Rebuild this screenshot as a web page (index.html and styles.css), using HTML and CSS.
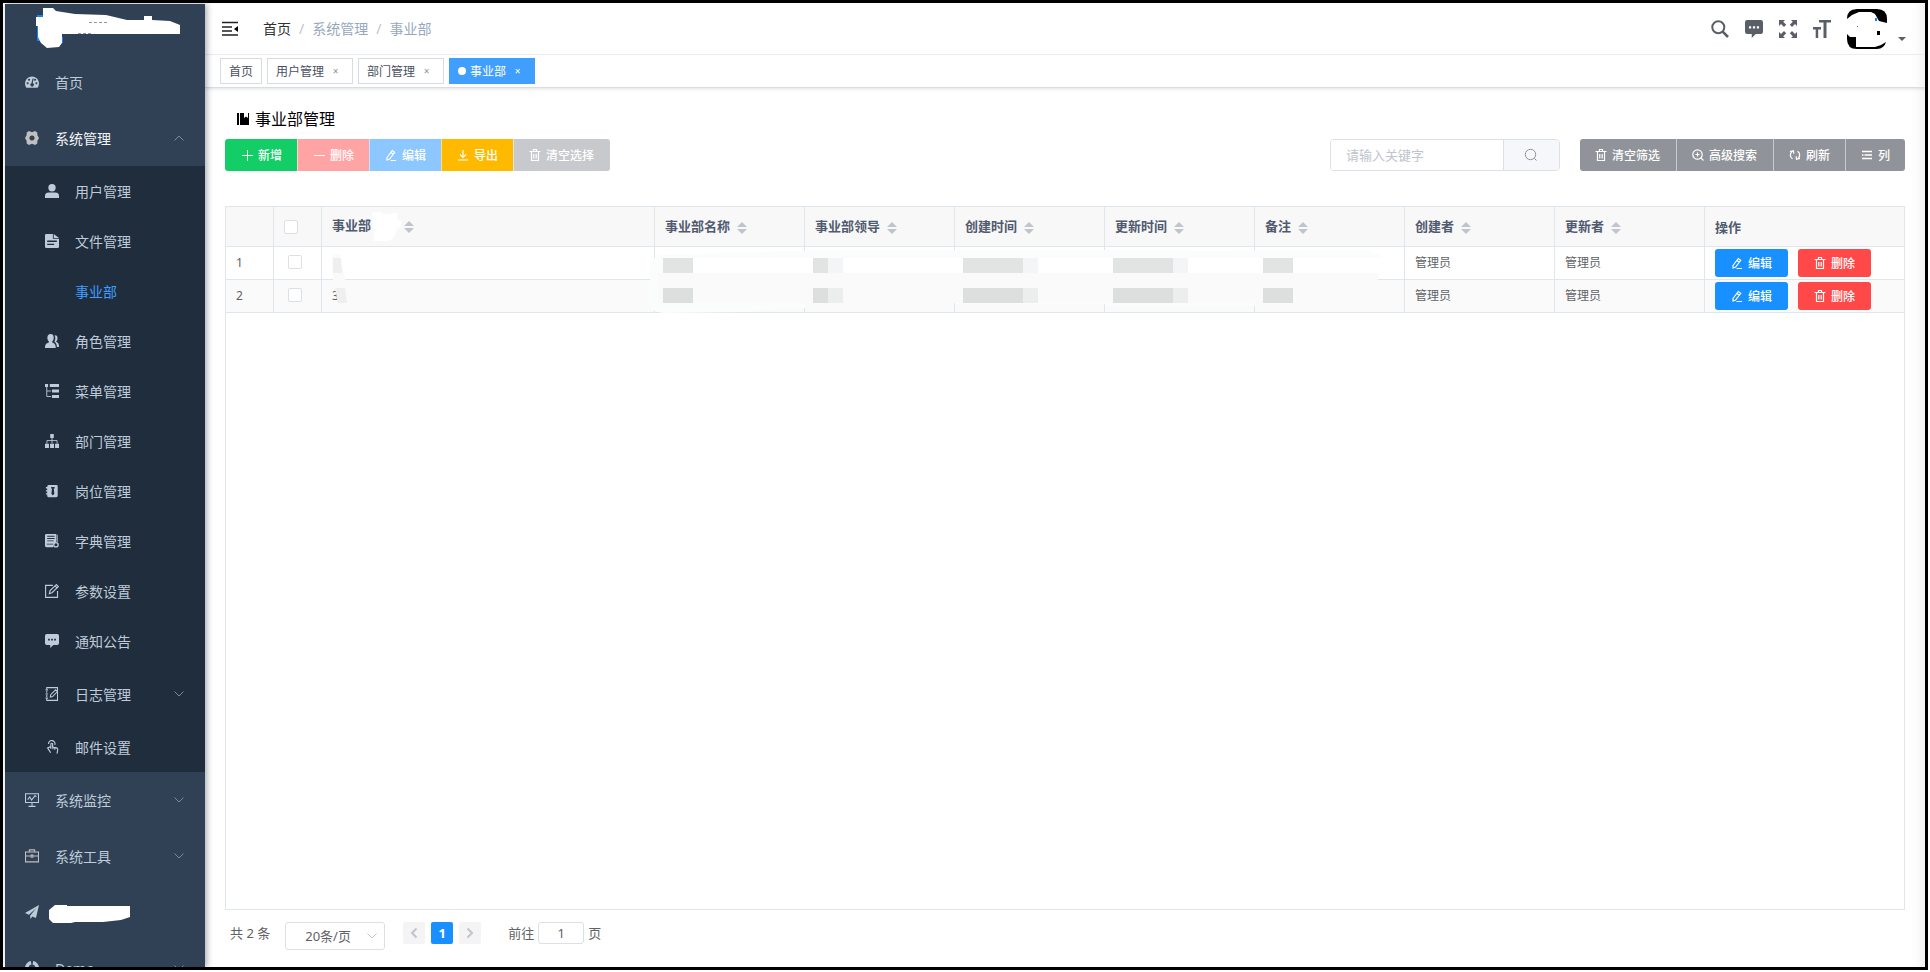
FILE: index.html
```html
<!DOCTYPE html>
<html lang="zh-CN">
<head>
<meta charset="utf-8">
<title>事业部管理</title>
<link rel="stylesheet" href="styles.css">
</head>
<body>
<svg class="defs" aria-hidden="true">
  <symbol id="dash" viewBox="0 0 16 16"><path fill="currentColor" fill-rule="evenodd" d="M1.6 14.5A8 8 0 1 1 14.400 14.500zM3 8.300a1.100 1.100 0 1 0 .01 0zM4.600 4.400a1.100 1.100 0 1 0 .01 0zM11.400 4.400a1.100 1.100 0 1 0 .01 0zM13 8.300a1.100 1.100 0 1 0 .01 0zM8.600 4 7.400 9.300a2 2 0 1 0 1.500 0L9.800 4z"/></symbol>
  <symbol id="gear" viewBox="0 0 16 16"><path fill="currentColor" fill-rule="evenodd" d="M4.500 0 8 1.300 11.500 0l2.500 1.800.2 3L16 8l-1.800 3.200-.2 3-2.500 1.800L8 14.700 4.500 16 2 14.200l-.2-3L0 8l1.800-3.200.2-3zM8 5a3 3 0 1 0 .01 0z"/></symbol>
  <symbol id="user" viewBox="0 0 16 16"><circle cx="8" cy="4.300" r="4.200" fill="currentColor"/><path fill="currentColor" d="M0 16v-2.500Q0 9.600 4.500 9.600h7Q16 9.600 16 13.500V16z"/></symbol>
  <symbol id="doc" viewBox="0 0 16 16"><path fill="currentColor" fill-rule="evenodd" d="M1.500 0H9v5.500h7v9q0 1.500-1.500 1.500h-13Q0 16 0 14.500v-13Q0 0 1.500 0zM10 0l6 4.600h-6zM2.500 7.500V9h11V7.500zM2.500 11v1.500h8V11z"/></symbol>
  <symbol id="peoples" viewBox="0 0 16 16"><path fill="currentColor" d="M6.500 0C9 0 10 1.900 10 4.200 10 6.400 9.200 7.500 8.300 8.400v1.200c2.500.9 4 2 4 6.400H0c0-4.400 1.500-5.500 4.400-6.400V8.400C3.400 7.500 2.700 6.400 2.700 4.200 2.700 1.900 4 0 6.500 0zM11 1.500c2.500-.2 3.300 1.300 3.300 3.400 0 2-.7 3-1.700 4 2.700 1 3.400 2.600 3.400 6h-2.400c-.2-3.300-1-4.900-2.900-6C12 7 12.200 4 11 1.500z"/></symbol>
  <symbol id="tree" viewBox="0 0 16 16"><path fill="currentColor" d="M0 0h3.500v3.500H0zM5.500 0H16v3.500H5.500zM8 6.300h8v3.500H8zM8 12.500h8V16H8z"/><path fill="none" stroke="currentColor" d="M2 3v11.300h5M2 8h5"/></symbol>
  <symbol id="org" viewBox="0 0 16 16"><path fill="currentColor" d="M6 0h4v4.500H6zM0 11h4.500v5H0zM5.800 11h4.500v5H5.800zM11.500 11H16v5h-4.500z"/><path fill="none" stroke="currentColor" d="M8 4v7M2.200 11V7.500h11.600V11"/></symbol>
  <symbol id="post" viewBox="0 0 16 16"><path fill="currentColor" fill-rule="evenodd" d="M4 1h9q1.500 0 1.500 1.500v11Q14.500 15 13 15H4q-1.500 0-1.500-1.500V12H1v-1.500h1.500v-2H1V7h1.500V5H1V3.500h1.500Q2.500 1 4 1zM7 3.500V5h1l-.7 6L9 13l1.700-2L10 5h1V3.500z"/></symbol>
  <symbol id="dict" viewBox="0 0 16 16"><path fill="currentColor" fill-rule="evenodd" d="M1.500 0H13v8.500l-3 2.500H2v1h7.500v3h-8Q0 15 0 13.500v-12Q0 0 1.500 0zM2.500 2v1H11V2zm0 2.700v1H11v-1zm0 2.700v1H10v-1z"/><circle cx="12.500" cy="12.300" r="2.500" fill="none" stroke="currentColor" stroke-width="1.500"/><path stroke="currentColor" d="M14 1v8"/></symbol>
  <symbol id="edit" viewBox="0 0 16 16"><path fill="none" stroke="currentColor" stroke-width="1.300" d="M9 1.600H.7v13.700h13.600V8M5 11l.8-3.500L13 .7l2.200 2.200L8 10zM11.500 2.200l2.200 2.200"/></symbol>
  <symbol id="msg" viewBox="0 0 16 16"><path fill="currentColor" fill-rule="evenodd" d="M2 0h12q2 0 2 2v8.500q0 2-2 2H9.500L6 16v-3.500H2q-2 0-2-2V2q0-2 2-2zM3.500 5.500v2h2v-2zm3.500 0v2h2v-2zm3.500 0v2h2v-2z"/></symbol>
  <symbol id="log" viewBox="0 0 16 16"><path fill="none" stroke="currentColor" stroke-width="1.200" d="M2 3V.7h12.300v14.600H2V13M2 4.500v2M2 9v2.500M.5 3.500h3M.5 8h3M.5 12.500h3M6 11.500 6.700 8.500l5.500-5.300 2 2L8.700 11z"/></symbol>
  <symbol id="touch" viewBox="0 0 16 16"><path fill="none" stroke="currentColor" stroke-width="1.300" d="M4 4.500a3.700 3.700 0 1 1 7.200 1M6.700 10V4.500q1-1.500 2 0V8l4.500 1q1.600.6 1.300 2.500l-.8 4M6.700 9 5.200 8 3 9l3.500 5.500M9 8.500v2M11.200 9v2"/></symbol>
  <symbol id="monitor" viewBox="0 0 16 16"><path fill="none" stroke="currentColor" stroke-width="1.200" d="M.6.8h14.800v10H.6zM8 11v4.200M4 15.300h8M3 7.500l2.500-3L7.500 8l4-5 1.500 1.500"/></symbol>
  <symbol id="tool" viewBox="0 0 16 16"><path fill="none" stroke="currentColor" stroke-width="1.200" d="M.6 3.500h14.800v11.200H.6zM5 3.500V1h6v2.500M.6 8H7m2 0h6.400M7 7h2v2.500H7z"/></symbol>
  <symbol id="plane" viewBox="0 0 16 16"><path fill="currentColor" d="M16 0 0 9l4.500 2L13 3.500 6 12v4l2.500-3 4 1.800z"/></symbol>
  <symbol id="ring" viewBox="0 0 16 16"><path fill="none" stroke="currentColor" stroke-width="4" d="M7 2.100A6 6 0 0 0 2 8a6 6 0 0 0 12 0 6 6 0 0 0-5-5.900"/></symbol>
  <symbol id="down" viewBox="0 0 12 12"><path fill="none" stroke="currentColor" d="M1.500 3.500 6 8l4.500-4.500"/></symbol>
  <symbol id="search" viewBox="0 0 18 18"><circle cx="7.300" cy="7.300" r="6" fill="none" stroke="currentColor" stroke-width="2"/><path stroke="currentColor" stroke-width="2.600" d="m11.700 11.700 5.300 5.300"/></symbol>
  <symbol id="full" viewBox="0 0 18 18"><path fill="currentColor" d="M0 0h6L4.200 1.800l3 3L5 7 2 4 0 6zM18 0v6l-2-2-3 3-2.200-2.200 3-3L12 0zM0 18v-6l2 2 3-3 2.200 2.200-3 3L6 18zM18 18h-6l1.800-1.800-3-3L13 11l3 3 2-2z"/></symbol>
  <symbol id="size" viewBox="0 0 18 18"><path fill="currentColor" d="M6 0h12v2.500h-4.500V18h-3V2.500H6zM0 7h8v2.500H5.200V18H2.700V9.500H0z"/></symbol>
  <symbol id="plus" viewBox="0 0 12 12"><path stroke="currentColor" d="M1 6.500h11M6.500 1v11"/></symbol>
  <symbol id="minus" viewBox="0 0 12 12"><path stroke="currentColor" d="M1 6.500h11"/></symbol>
  <symbol id="pen" viewBox="0 0 12 12"><path fill="none" stroke="currentColor" stroke-width="1.200" d="m2 8.500 5.300-7 2.400 1.800-5.300 7L2 11zM6 3.500l2.300 1.700M5.500 11.500H11"/></symbol>
  <symbol id="export" viewBox="0 0 12 12"><path fill="none" stroke="currentColor" stroke-width="1.200" d="M6 1v7.500M3 5.500l3 3 3-3M1 11h10"/></symbol>
  <symbol id="trash" viewBox="0 0 12 12"><path fill="none" stroke="currentColor" stroke-width="1.200" d="M.5 2.500h11M2.500 2.500v9h7v-9M4.500 2V.5h3V2M4.800 5v4.500M7.200 5v4.500"/></symbol>
  <symbol id="zoomin" viewBox="0 0 12 12"><circle cx="5.500" cy="5.500" r="4.700" fill="none" stroke="currentColor" stroke-width="1.200"/><path stroke="currentColor" stroke-width="1.200" d="M3.500 5.500h4M5.500 3.500v4M9 9l2.500 2.500"/></symbol>
  <symbol id="refresh" viewBox="0 0 12 12"><path fill="none" stroke="currentColor" stroke-width="1.200" d="M3.500 9.800A4.500 4.500 0 0 1 4.500 1.700M8.500 2.200A4.500 4.500 0 0 1 7.500 10.300M1 2.500l3.500-.8.300 3M11 9.500l-3.500.8-.3-3"/></symbol>
  <symbol id="cols" viewBox="0 0 12 12"><path stroke="currentColor" stroke-width="1.300" d="M1 2.500h10M1 6h1.500M3.500 6H11M1 9.500h10"/></symbol>
  <symbol id="find" viewBox="0 0 14 14"><circle cx="6.500" cy="6.500" r="5.200" fill="none" stroke="currentColor"/><path stroke="currentColor" d="m10.300 10.300 2.200 2.200"/></symbol>
  <symbol id="sort" viewBox="0 0 10 14"><path fill="#c0c4cc" d="M0 6l5-5 5 5zM0 8l5 5 5-5z"/></symbol>
</svg>

<div class="frame">
  <aside class="sidebar">
    <div class="logo">
      <svg width="146" height="42" viewBox="0 0 146 42"><path fill="#1283ff" d="M1 8h8v26H1zM20 30h7v6h-7z"/><path fill="#fff" d="M7 1h10l3 3 19 3 31 1 21 5h17V9h8v4l18 1 10 4v9H26v9l-3 4-12 1-6-5-3-6V19H0v-9h7z"/><path stroke="#8d99a8" fill="none" stroke-dasharray="3 2" d="M53 15.500h18M42 26.500h14"/></svg>
    </div>
    <nav>
      <a class="item" href="#"><svg class="ico"><use href="#dash"/></svg>首页</a>
      <button class="item open" type="button"><svg class="ico gray"><use href="#gear"/></svg>系统管理<svg class="chev up"><use href="#down"/></svg></button>
      <div class="sub">
        <a class="item" href="#"><svg class="ico"><use href="#user"/></svg>用户管理</a>
        <a class="item" href="#"><svg class="ico"><use href="#doc"/></svg>文件管理</a>
        <a class="item active" href="#"><svg class="ico"></svg>事业部</a>
        <a class="item" href="#"><svg class="ico"><use href="#peoples"/></svg>角色管理</a>
        <a class="item" href="#"><svg class="ico"><use href="#tree"/></svg>菜单管理</a>
        <a class="item" href="#"><svg class="ico"><use href="#org"/></svg>部门管理</a>
        <a class="item" href="#"><svg class="ico"><use href="#post"/></svg>岗位管理</a>
        <a class="item" href="#"><svg class="ico"><use href="#dict"/></svg>字典管理</a>
        <a class="item" href="#"><svg class="ico"><use href="#edit"/></svg>参数设置</a>
        <a class="item" href="#"><svg class="ico"><use href="#msg"/></svg>通知公告</a>
        <button class="item tall" type="button"><svg class="ico"><use href="#log"/></svg>日志管理<svg class="chev"><use href="#down"/></svg></button>
        <a class="item" href="#"><svg class="ico"><use href="#touch"/></svg>邮件设置</a>
      </div>
      <button class="item" type="button"><svg class="ico"><use href="#monitor"/></svg>系统监控<svg class="chev"><use href="#down"/></svg></button>
      <button class="item" type="button"><svg class="ico gray"><use href="#tool"/></svg>系统工具<svg class="chev"><use href="#down"/></svg></button>
      <a class="item masked" href="#" aria-label="外部链接"><svg class="ico"><use href="#plane"/></svg><svg width="82" height="24" viewBox="0 -4 82 24"><path fill="#fff" d="M6 1h12v1h63v11l-9 3-18 2H26l-4 1H4l-4-4V6z"/></svg></a>
      <button class="item" type="button"><svg class="ico"><use href="#ring"/></svg>Demo<svg class="chev"><use href="#down"/></svg></button>
    </nav>
  </aside>

  <div class="page">
    <header class="navbar">
      <button class="fold" type="button" aria-label="收起菜单"><svg width="17" height="16" viewBox="0 0 17 16"><path stroke="#222" stroke-width="1.600" d="M0 1.500h16M0 6h10M0 10h10M0 14h16"/><path d="M16 5v6l-4-3z"/></svg></button>
      <div class="crumbs"><a href="#">首页</a><i>/</i><span>系统管理</span><i>/</i><span>事业部</span></div>
      <div class="tools">
        <button type="button" aria-label="搜索"><svg><use href="#search"/></svg></button>
        <button type="button" aria-label="消息"><svg><use href="#msg"/></svg></button>
        <button type="button" aria-label="全屏"><svg><use href="#full"/></svg></button>
        <button type="button" aria-label="字号"><svg><use href="#size"/></svg></button>
        <button class="avatar" type="button" aria-label="用户"><svg class="face" viewBox="0 0 40 40"><path d="M10 0h20q10 0 10 10v4l-8-2-4-7-4-2H12L5 6 0 10Q0 0 10 0zM0 25l3 3h6v10h19l6-2 5-3q-2 7-9 7H10Q0 40 0 30zM30 22h3v4h-3z"/><path fill="#1283ff" d="M28 9h2v3h-2zM10 17h1v1h-1z"/></svg><svg class="caret" viewBox="0 0 8 4"><path fill="#5a5e66" d="M0 0h8L4 4z"/></svg></button>
      </div>
    </header>

    <div class="tags">
      <a class="tag" href="#">首页</a>
      <a class="tag" href="#">用户管理<b>×</b></a>
      <a class="tag" href="#">部门管理<b>×</b></a>
      <a class="tag on" href="#">事业部<b>×</b></a>
    </div>

    <main>
      <h1><svg width="13" height="12" viewBox="0 0 13 12"><path d="M0 0h2v12H0zM3 0h4v5l2-1.500L11 5V0h1v12H3z"/></svg>事业部管理</h1>
      <div class="toolbar">
        <div class="group">
          <button class="btn green" type="button"><svg><use href="#plus"/></svg>新增</button>
          <button class="btn pink" type="button"><svg><use href="#minus"/></svg>删除</button>
          <button class="btn sky" type="button"><svg><use href="#pen"/></svg>编辑</button>
          <button class="btn amber" type="button"><svg><use href="#export"/></svg>导出</button>
          <button class="btn pale" type="button"><svg><use href="#trash"/></svg>清空选择</button>
        </div>
        <form class="query">
          <input type="text" placeholder="请输入关键字" aria-label="关键字">
          <button type="button" aria-label="查询"><svg><use href="#find"/></svg></button>
        </form>
        <div class="group">
          <button class="btn slate wide" type="button"><svg><use href="#trash"/></svg>清空筛选</button>
          <button class="btn slate wide" type="button"><svg><use href="#zoomin"/></svg>高级搜索</button>
          <button class="btn slate" type="button"><svg><use href="#refresh"/></svg>刷新</button>
          <button class="btn slate" type="button"><svg><use href="#cols"/></svg>列</button>
        </div>
      </div>

      <div class="grid">
        <table>
          <colgroup><col class="c-s"><col class="c-s"><col class="c-l"><col class="c-m"><col class="c-m"><col class="c-m"><col class="c-m"><col class="c-m"><col class="c-m"><col class="c-m"><col></colgroup>
          <thead><tr>
            <th></th>
            <th><input type="checkbox" aria-label="全选"></th>
            <th class="sortable hidden-part">事业部<svg class="blot" viewBox="0 0 30 30"><path fill="#fff" d="M1 1h10l1 2 14-1v7l4 1v6l-4 2-3 8-5 4H3z"/></svg><svg class="sort"><use href="#sort"/></svg></th>
            <th class="sortable">事业部名称<svg class="sort"><use href="#sort"/></svg></th>
            <th class="sortable">事业部领导<svg class="sort"><use href="#sort"/></svg></th>
            <th class="sortable">创建时间<svg class="sort"><use href="#sort"/></svg></th>
            <th class="sortable">更新时间<svg class="sort"><use href="#sort"/></svg></th>
            <th class="sortable">备注<svg class="sort"><use href="#sort"/></svg></th>
            <th class="sortable">创建者<svg class="sort"><use href="#sort"/></svg></th>
            <th class="sortable">更新者<svg class="sort"><use href="#sort"/></svg></th>
            <th>操作</th>
          </tr></thead>
          <tbody>
            <tr><td>1</td><td><input type="checkbox" aria-label="选择第1行"></td><td></td><td></td><td></td><td></td><td></td><td></td><td>管理员</td><td>管理员</td>
              <td><div class="ops"><button class="btn blue" type="button"><svg><use href="#pen"/></svg>编辑</button><button class="btn red" type="button"><svg><use href="#trash"/></svg>删除</button></div></td></tr>
            <tr><td>2</td><td><input type="checkbox" aria-label="选择第2行"></td><td>3</td><td></td><td></td><td></td><td></td><td></td><td>管理员</td><td>管理员</td>
              <td><div class="ops"><button class="btn blue" type="button"><svg><use href="#pen"/></svg>编辑</button><button class="btn red" type="button"><svg><use href="#trash"/></svg>删除</button></div></td></tr>
          </tbody>
        </table>
        <svg class="mosaic" width="1070" height="70" viewBox="320 248 1070 70" aria-hidden="true">
          <path fill="#fafafa" d="M332 256l4-2 4 1v11l3 3 2 11H333z"/><path fill="#efefef" d="M333 258h8l1 15h-9zM335 288h10l2 15h-9z"/>
          <path fill="#fbfcfc" d="M650 262l8-7 80-3 110-2h325l20 1 140-1h35l14 6v17l-6 7v23H1255v3h-150v-2H955v-1H805v5l-33 1-30 3-80 1-12-4z"/>
          <path fill="#fafafa" d="M658 273h720v30H658z"/>
          <path fill="#fff" d="M664 258h720v15H664z"/>
          <path fill="#e2e3e3" d="M663 258h30v15h-30zM813 258h15v15h-15zM963 258h60v15h-60zM1113 258h60v15h-60zM1263 258h30v15h-30z"/>
          <path fill="#dddede" d="M663 288h30v15h-30zM813 288h15v15h-15zM963 288h60v15h-60zM1113 288h60v15h-60zM1263 288h30v15h-30z"/>
          <path fill="#f4f5f7" d="M828 258h15v15h-15zM1023 258h15v15h-15zM1173 258h15v15h-15z"/>
          <path fill="#eceeee" d="M828 288h15v15h-15zM1023 288h15v15h-15zM1173 288h15v15h-15z"/>
        </svg>
      </div>

      <footer class="pager">
        <span>共 2 条</span>
        <label class="per"><select aria-label="每页条数"><option>20条/页</option></select><svg><use href="#down"/></svg></label>
        <div class="nums">
          <button type="button" aria-label="上一页"><svg class="left"><use href="#down"/></svg></button>
          <button class="cur" type="button">1</button>
          <button type="button" aria-label="下一页"><svg class="right"><use href="#down"/></svg></button>
        </div>
        <label class="jump">前往<input type="text" value="1">页</label>
      </footer>
    </main>
  </div>
</div>
</body>
</html>
```
FILE: styles.css
```css
* { box-sizing: border-box; }
body {
  margin: 0;
  background: #fff;
  font-family: "Noto Sans", "Noto Sans CJK SC", sans-serif;
  font-size: 13px;
  color: #606266;
}
button, input, select { font: inherit; color: inherit; }
button { padding: 0; border: 0; background: none; }
a { color: inherit; text-decoration: none; }
svg { flex: none; }
.defs { position: absolute; width: 0; height: 0; }

.frame {
  display: flex;
  height: calc(100vh - 2px);
  margin-right: 2px;
  padding: 1px 0 0 2px;
  border: 3px solid #000;
  overflow: hidden;
}

/* Sidebar */
.sidebar {
  flex: none;
  width: 200px;
  background: #304156;
  color: #bfcbd9;
  font-size: 14px;
  overflow: hidden;
  box-shadow: 2px 0 6px rgba(0, 21, 41, .35);
  z-index: 1;
}
.logo { height: 50px; padding: 3px 0 0 31px; }
.item {
  display: flex;
  align-items: center;
  width: 100%;
  height: 56px;
  padding: 0 20px;
  text-align: left;
}
.ico { width: 14px; height: 14px; margin-right: 16px; }
.gray { color: #c0c0c0; }
.chev { width: 12px; height: 12px; margin-left: auto; color: #7c8998; }
.up { transform: rotate(180deg); }
.open { color: #f4f4f5; }
.sub { background: #1f2d3d; }
.sub .item { height: 50px; padding-left: 40px; }
.sub .tall { height: 56px; }
.active { color: #409eff; }
.masked .ico { margin-right: 10px; }

/* Top bar */
.page { flex: 1; min-width: 0; display: flex; flex-direction: column; box-shadow: inset -12px 0 12px -8px #f0f0f0; }
.navbar {
  display: flex;
  align-items: center;
  height: 51px;
  padding: 0 19px 0 17px;
  border-bottom: 1px solid #eff2f4;
}
.fold { display: flex; }
.crumbs { display: flex; margin-left: 24px; font-size: 14px; line-height: 20px; color: #97a8be; }
.crumbs a { color: #303133; }
.crumbs i { margin: 0 8px; font-style: normal; color: #c0c4cc; }
.tools { display: flex; align-items: center; gap: 16px; margin-left: auto; color: #5a5e66; }
.tools button { display: flex; }
.tools svg { width: 18px; height: 18px; }
.tools .avatar { align-items: flex-end; gap: 11px; }
.tools .face { width: 40px; height: 40px; }
.tools .caret { width: 8px; height: 4px; margin-bottom: 8px; }

.tags {
  display: flex;
  gap: 5px;
  height: 33px;
  padding: 3px 15px;
  border-bottom: 1px solid #d8dce5;
  box-shadow: 0 1px 3px rgba(0, 0, 0, .12);
}
.tag {
  display: flex;
  align-items: center;
  height: 26px;
  padding: 0 8px;
  border: 1px solid #d8dce5;
  font-size: 12px;
  color: #495060;
}
.tag b { width: 17px; margin-left: 3px; text-align: center; font-size: 10px; font-weight: 400; color: #909399; }
.on { background: #409eff; border-color: #409eff; color: #fff; }
.on::before { content: ""; width: 8px; height: 8px; margin-right: 4px; border-radius: 50%; background: #fff; }
.on b { color: #fff; }

/* Content */
main { flex: 1; min-height: 0; display: flex; flex-direction: column; padding: 20px; padding-bottom: 0; }
h1 {
  display: flex;
  align-items: center;
  gap: 5px;
  margin: 0 0 9px;
  padding-left: 12px;
  font-size: 16px;
  font-weight: 400;
  line-height: 22px;
  color: #000;
}
.toolbar { display: flex; margin-bottom: 35px; }
.group { display: flex; border-radius: 3px; overflow: hidden; }
.btn {
  display: flex;
  align-items: center;
  justify-content: center;
  gap: 5px;
  height: 32px;
  padding: 0 15px;
  font-size: 12px;
  font-weight: 500;
  color: #fff;
}
.btn svg { width: 12px; height: 12px; }
.group .btn + .btn { border-left: 1px solid rgba(255, 255, 255, .5); }
.green { background: #13ce66; padding-left: 16px; }
.pink { background: #ffa4a4; }
.sky { background: #8cc8ff; }
.amber { background: #ffba00; }
.pale { background: #c8c9cc; padding-right: 16px; }
.slate { background: #909399; }
.wide { padding-right: 16px; }
.query { display: flex; margin: 0 20px 0 auto; height: 32px; width: 230px; border: 1px solid #dcdfe6; border-radius: 4px; overflow: hidden; }
.query input { flex: 1; min-width: 0; padding: 0 15px 1px; border: 0; background: #fff; outline: 0; }
.query input::placeholder { color: #c0c4cc; }
.query button { display: flex; align-items: center; justify-content: center; width: 56px; background: #f5f7fa; border-left: 1px solid #dcdfe6; color: #909399; }
.query svg { width: 14px; height: 14px; }

.grid { position: relative; flex: 1; border: 1px solid #dfe6ec; }
table { width: 100%; table-layout: fixed; border-collapse: separate; border-spacing: 0; font-size: 12px; }
.c-s { width: 48px; }
.c-l { width: 333px; }
.c-m { width: 150px; }
th, td { padding: 0 10px; border: 0 solid #dfe6ec; border-width: 0 1px 1px 0; text-align: left; }
th:last-child, td:last-child { border-right: 0; }
th { height: 40px; background: #f8f8f9; color: #515a6e; font-size: 13px; font-weight: 600; }
.sortable { padding-bottom: 3px; }
td { height: 33px; padding-bottom: 2px; }
td:last-child { padding-bottom: 0; }
tr:nth-child(2) td { background: #fafafa; }
.sort { width: 10px; height: 14px; margin-left: 7px; vertical-align: -4px; }
.blot { width: 30px; height: 30px; vertical-align: middle; }
.hidden-part { padding-bottom: 1px; }
.hidden-part .sort { margin-left: 3px; }
input[type="checkbox"] {
  appearance: none;
  display: block;
  width: 14px;
  height: 14px;
  margin: 0 4px;
  border: 1px solid #dcdfe6;
  border-radius: 2px;
  background: #fff;
}
th input[type="checkbox"] { margin: 0; }
.ops { display: flex; gap: 10px; }
.ops .btn { width: 73px; height: 28px; border-radius: 3px; }
.blue { background: #1890ff; }
.red { background: #ff4949; }
.mosaic { position: absolute; left: 94px; top: 41px; }

.pager { display: flex; align-items: flex-start; height: 57px; padding: 12px 5px 0; line-height: 22px; }
.per { position: relative; display: flex; margin-left: 15px; }
.per select { appearance: none; width: 100px; height: 28px; padding: 0 19px 1px; border: 1px solid #dcdfe6; border-radius: 3px; background: #fff; }
.per svg { position: absolute; right: 7px; top: 8px; width: 12px; height: 12px; color: #c0c4cc; }
.nums { display: flex; gap: 6px; margin-left: 18px; }
.nums button { display: flex; align-items: center; justify-content: center; width: 22px; height: 22px; border-radius: 2px; background: #f4f4f5; color: #c0c4cc; }
.nums .cur { background: #1890ff; color: #fff; font-weight: 700; }
.nums svg { width: 12px; height: 12px; stroke-width: 2; }
.left { transform: rotate(90deg); }
.right { transform: rotate(-90deg); }
.jump { display: flex; gap: 4px; margin-left: 27px; }
.jump input { width: 46px; height: 22px; padding: 0; border: 1px solid #dcdfe6; border-radius: 3px; text-align: center; }
```
